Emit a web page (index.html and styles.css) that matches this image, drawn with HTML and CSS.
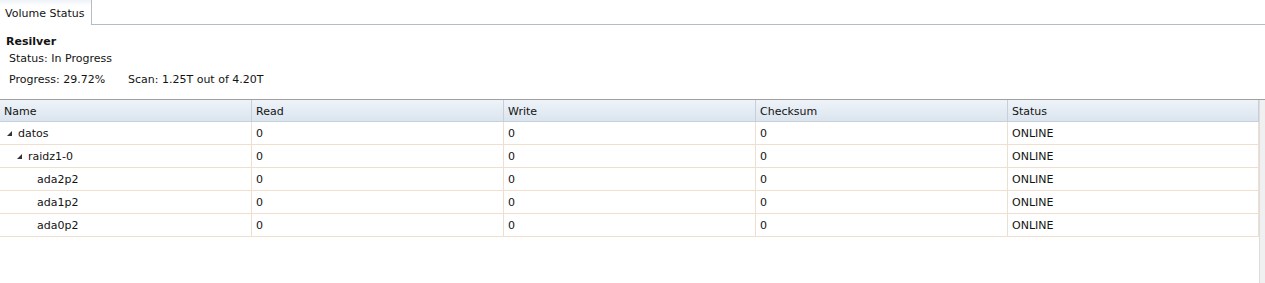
FILE: index.html
```html
<!DOCTYPE html>
<html>
<head>
<meta charset="utf-8">
<link rel="stylesheet" href="styles.css">
</head>
<body>
<div class="tabbar">
  <div class="tab">Volume Status</div>
  <div class="tabfill"></div>
</div>
<div class="summary">
  <div class="title">Resilver</div>
  <div class="line first">Status: In Progress</div>
  <div class="line"><span class="prog">Progress: 29.72%</span><span>Scan: 1.25T out of 4.20T</span></div>
</div>
<div class="gridwrap">
  <div class="grid">
    <div class="row head">
      <div class="cell">Name</div><div class="cell">Read</div><div class="cell">Write</div><div class="cell">Checksum</div><div class="cell">Status</div>
    </div>
    <div class="row">
      <div class="cell name l0"><span class="tri"></span>datos</div><div class="cell">0</div><div class="cell">0</div><div class="cell">0</div><div class="cell">ONLINE</div>
    </div>
    <div class="row">
      <div class="cell name l1"><span class="tri"></span>raidz1-0</div><div class="cell">0</div><div class="cell">0</div><div class="cell">0</div><div class="cell">ONLINE</div>
    </div>
    <div class="row">
      <div class="cell name l2">ada2p2</div><div class="cell">0</div><div class="cell">0</div><div class="cell">0</div><div class="cell">ONLINE</div>
    </div>
    <div class="row">
      <div class="cell name l2">ada1p2</div><div class="cell">0</div><div class="cell">0</div><div class="cell">0</div><div class="cell">ONLINE</div>
    </div>
    <div class="row">
      <div class="cell name l2">ada0p2</div><div class="cell">0</div><div class="cell">0</div><div class="cell">0</div><div class="cell">ONLINE</div>
    </div>
  </div>
  <div class="scroll"></div>
</div>
</body>
</html>
```
FILE: styles.css
```css
html, body {
  margin: 0;
  padding: 0;
  background: #fff;
  height: 100%;
}
body {
  font-family: "DejaVu Sans", Verdana, sans-serif;
  font-size: 11px;
  color: #131313;
  display: flex;
  flex-direction: column;
}
.tabbar {
  display: flex;
  height: 25px;
}
.tab {
  width: 86px;
  padding-left: 5px;
  height: 25px;
  line-height: 27px;
  border-right: 1px solid #b5bcc7;
  background: linear-gradient(#eef3f9 0, #ffffff 6px);
}
.tabfill {
  flex: 1;
  border-bottom: 1px solid #b5bcc7;
  height: 24px;
}
.summary {
  padding: 10px 0 0 6px;
  height: 64px;
}
.title {
  font-weight: bold;
  height: 17px;
  line-height: 14px;
}
.line {
  padding-left: 3px;
  height: 20px;
  line-height: 14px;
}
.line.first {
  height: 21px;
}
.prog {
  display: inline-block;
  width: 119px;
}
.gridwrap {
  flex: 1;
  display: flex;
  border-top: 1px solid #a0a0a0;
}
.grid {
  flex: 1;
}
.scroll {
  width: 6px;
  background: #f0f0f0;
  border-left: 1px solid #dcdcdc;
}
.row {
  display: grid;
  grid-template-columns: 252px 252px 252px 252px 251px;
  height: 22px;
  border-bottom: 1px solid #efdfcc;
}
.row.head {
  height: 21px;
  border-bottom: 1px solid #c6d0da;
  background: linear-gradient(#eef3f8, #dbe5ef);
}
.cell {
  padding-left: 4px;
  padding-top: 1px;
  line-height: 21px;
  border-right: 1px solid #ede0d0;
  white-space: nowrap;
  overflow: hidden;
}
.head .cell {
  padding-top: 2px;
  line-height: 19px;
  border-right: 1px solid #c6d0da;
  padding-left: 4px;
}
.name.l0 { padding-left: 7px; }
.name.l1 { padding-left: 17px; }
.name.l2 { padding-left: 37px; }
.tri {
  display: inline-block;
  width: 0;
  height: 0;
  border-left: 5px solid transparent;
  border-bottom: 5px solid #333;
  margin-right: 6px;
  vertical-align: 1px;
}
```
